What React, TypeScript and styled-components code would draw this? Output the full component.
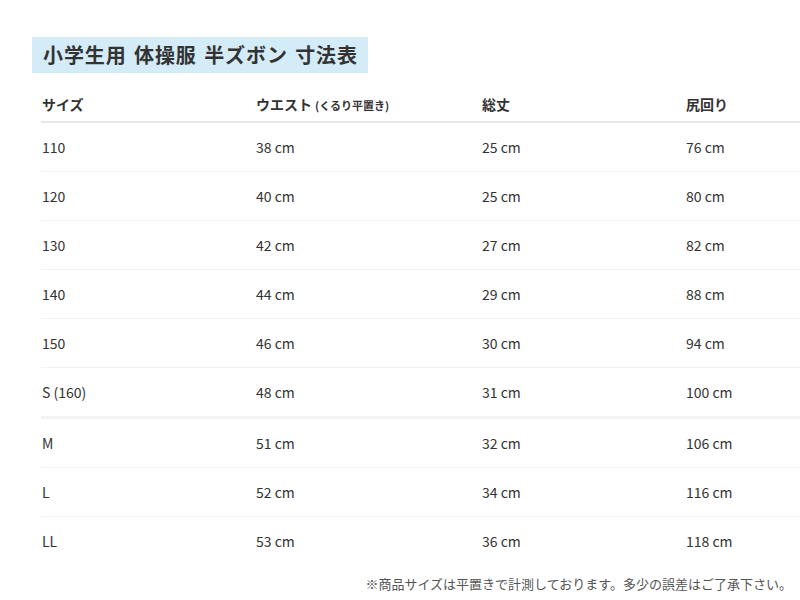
import styled, { createGlobalStyle } from "styled-components";

const GlobalStyle = createGlobalStyle`
    html, body {
        margin: 0;
        padding: 0;
        background: #fff;
        width: 800px;
        height: 600px;
        overflow: hidden;
    }
    body {
        font-family: "Noto Sans CJK JP", "Noto Sans", sans-serif;
        color: #333;
    }
`

const Page = styled.div`
    display: flex;
    flex-direction: column;
    padding: 37px 0 0 41px;
    width: 759px;
    height: 563px;
`

const Title = styled.h1`
    align-self: flex-start;
    margin: 0 0 0 -9px;
    padding: 0 10px 0 11px;
    height: 36px;
    line-height: 36px;
    background: #d4ebf8;
    color: #333;
    font-size: 20px;
    font-weight: 700;
    letter-spacing: 0.9px;
    word-spacing: 2px;
`

const Table = styled.div`
    display: flex;
    flex-direction: column;
    margin-top: 13px;
`

const Row = styled.div<{ $head?: boolean; $thick?: boolean; $last?: boolean }>`
    display: grid;
    grid-template-columns: 214px 226px 204px 1fr;
    align-items: center;
    height: ${p => (p.$head ? "35px" : "48px")};
    border-bottom: ${p =>
        p.$head ? "2px solid #e8e8e8" : p.$last ? "none" : p.$thick ? "3px solid #f3f3f3" : "1px solid #f1f1f1"};
    font-size: 14px;
    font-weight: ${p => (p.$head ? 700 : 400)};
    color: #333;
`

const Cell = styled.div`
    padding-left: 1px;
    white-space: nowrap;
`

const Note = styled.span`
    font-size: 11px;
    font-weight: 700;
    margin-left: 3px;
`

const Footer = styled.p`
    margin: auto 8px 0 0;
    padding-bottom: 7px;
    text-align: right;
    font-size: 13px;
    color: #555;
`

const rows = [
    ["110", "38 cm", "25 cm", "76 cm"],
    ["120", "40 cm", "25 cm", "80 cm"],
    ["130", "42 cm", "27 cm", "82 cm"],
    ["140", "44 cm", "29 cm", "88 cm"],
    ["150", "46 cm", "30 cm", "94 cm"],
    ["S (160)", "48 cm", "31 cm", "100 cm"],
    ["M", "51 cm", "32 cm", "106 cm"],
    ["L", "52 cm", "34 cm", "116 cm"],
    ["LL", "53 cm", "36 cm", "118 cm"],
];

export default function App() {
    return (
        <>
            <GlobalStyle />
            <Page>
                <Title>小学生用 体操服 半ズボン 寸法表</Title>
                <Table>
                    <Row $head>
                        <Cell>サイズ</Cell>
                        <Cell>ウエスト<Note>(くるり平置き)</Note></Cell>
                        <Cell>総丈</Cell>
                        <Cell>尻回り</Cell>
                    </Row>
                    {rows.map((r, i) => (
                        <Row key={r[0]} $thick={i === 5} $last={i === rows.length - 1}>
                            {r.map(c => <Cell key={c}>{c}</Cell>)}
                        </Row>
                    ))}
                </Table>
                <Footer>※商品サイズは平置きで計測しております。多少の誤差はご了承下さい。</Footer>
            </Page>
        </>
    )
}
